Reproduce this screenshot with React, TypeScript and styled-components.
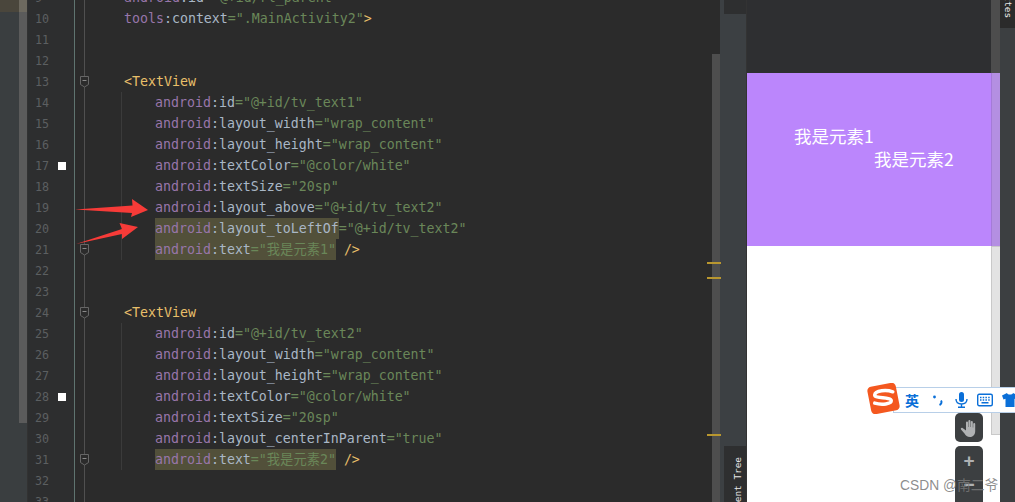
import React, { ReactNode } from 'react';
import styled, { createGlobalStyle } from 'styled-components';

const GlobalStyle = createGlobalStyle`
  html, body { margin: 0; padding: 0; background: #2b2b2b; }
  #root { width: 1015px; height: 502px; overflow: hidden; }
`;

const MONO = `"DejaVu Sans Mono", "Liberation Mono", monospace`;
const CJK = `"Noto Sans CJK SC", "Liberation Sans", sans-serif`;

interface LineProps {
  n: number;
  changed?: boolean;
  fold?: boolean;
  guide?: boolean;
  indent?: boolean;
  children?: ReactNode;
}

const FoldMark = () => (
  <FoldIcon viewBox="0 0 10 12">
    <path d="M.5.5h8v8L4.5 11 .5 8.5z" fill="#2b2b2b" stroke="#666" />
    <path d="M2.5 4.5h4" stroke="#888" />
  </FoldIcon>
);

const Line = ({ n, changed, fold, guide, indent, children }: LineProps) => (
  <Row>
    <Gutter>
      <LineNumber>{n}</LineNumber>
      {changed && <ChangeMark />}
    </Gutter>
    <FoldCell>{fold && <FoldMark />}</FoldCell>
    <Code $guide={guide} $indent={indent}>{children}</Code>
  </Row>
);

const Attr = ({ name, value, mark, markName }: { name: string; value: ReactNode; mark?: boolean; markName?: boolean }) => {
  const key = (
    <>
      <Ns>android</Ns><Plain>:{name}</Plain>
    </>
  );
  if (markName) {
    return <><Marked>{key}</Marked><Str>={value}</Str></>;
  }
  if (mark) {
    return <Marked>{key}<Str>={value}</Str></Marked>;
  }
  return <>{key}<Str>={value}</Str></>;
};

const SogouBar = () => (
  <ImeBar>
    <ImeLogo viewBox="0 0 32 30">
      <rect x="2" y="1.500" width="28" height="27" rx="4" fill="#f4581f" transform="rotate(-11 16 15)" />
      <path d="M25 8.500C19 6.500 8 7 7.500 11.500c-.4 3.800 15.500 1.800 16 5.500.4 3.300-9 4.500-16 2.500" fill="none" stroke="#fff" strokeWidth="3.400" strokeLinecap="round" />
    </ImeLogo>
    <ImeLang>英</ImeLang>
    <ImePunct viewBox="0 0 12 12">
      <circle cx="2.500" cy="3" r="1.400" fill="#0a6fd8" />
      <path d="M9 6.500c1 1.500.5 3.500-1.500 4.500" fill="none" stroke="#0a6fd8" strokeWidth="2" />
    </ImePunct>
    <ImeIcon viewBox="0 0 13 16" $w={13}>
      <rect x="4" y="0" width="5" height="10" rx="2.500" fill="#0a6fd8" />
      <path d="M1 7c0 3.500 2.500 5 5.500 5S12 10.500 12 7M6.500 12v3M3 15.200h7" fill="none" stroke="#0a6fd8" strokeWidth="1.400" />
    </ImeIcon>
    <ImeIcon viewBox="0 0 16 13" $w={16}>
      <rect x=".7" y=".7" width="14.600" height="11.600" rx="1.500" fill="none" stroke="#0a6fd8" strokeWidth="1.400" />
      <path d="M3 4h1.500M5.700 4h1.500M8.400 4h1.500M11.200 4h1.500M3 6.500h1.500M5.700 6.500h1.500M8.400 6.500h1.500M11.200 6.500h1.500M4.500 9.300h7" stroke="#0a6fd8" strokeWidth="1.400" />
    </ImeIcon>
    <ImeIcon viewBox="0 0 16 14" $w={16}>
      <path d="M5 0 0 2.500 1.500 6.500 3.500 5.800V14h9V5.800l2 .7L16 2.500 11 0c-.5 2-5.500 2-6 0z" fill="#0a6fd8" />
    </ImeIcon>
  </ImeBar>
);

const HandIcon = () => (
  <HandSvg viewBox="0 0 18 18">
    <path
      d="M6 9V3.500a1 1 0 0 1 2 0V8h.4V2a1 1 0 0 1 2 0v6h.4V3a1 1 0 0 1 2 0v5.500h.4V5a1 1 0 0 1 2 0v7c0 3.500-2 6-5.200 6-3 0-4.200-1.500-5.500-3.500L1 10.500c-.7-1 .6-2.200 1.600-1.400L6 11.500z"
      fill="#afb1b3"
    />
  </HandSvg>
);

export default function App() {
  return (
    <Screen>
      <GlobalStyle />
      <Editor>
        <Rail>
          <RailTint />
        </Rail>
        <LeftScroll>
          <LeftThumb />
        </LeftScroll>
        <EditorBody>
          <Line n={9}><Attr name="id" value={'"@+id/rl_parent"'} /></Line>
          <Line n={10}><Ns>tools</Ns><Plain>:context</Plain><Str>=".MainActivity2"</Str><Tag>&gt;</Tag></Line>
          <Line n={11} />
          <Line n={12} />
          <Line n={13} fold><Tag>&lt;TextView</Tag></Line>
          <Line n={14} guide indent><Attr name="id" value={'"@+id/tv_text1"'} /></Line>
          <Line n={15} guide indent><Attr name="layout_width" value={'"wrap_content"'} /></Line>
          <Line n={16} guide indent><Attr name="layout_height" value={'"wrap_content"'} /></Line>
          <Line n={17} changed guide indent><Attr name="textColor" value={'"@color/white"'} /></Line>
          <Line n={18} guide indent><Attr name="textSize" value={'"20sp"'} /></Line>
          <Line n={19} guide indent><Attr name="layout_above" value={'"@+id/tv_text2"'} /></Line>
          <Line n={20} guide indent><Attr name="layout_toLeftOf" markName value={'"@+id/tv_text2"'} /></Line>
          <Line n={21} fold guide indent>
            <Attr name="text" mark value={'"我是元素1"'} /><Tag> /&gt;</Tag>
          </Line>
          <Line n={22} />
          <Line n={23} />
          <Line n={24} fold><Tag>&lt;TextView</Tag></Line>
          <Line n={25} guide indent><Attr name="id" value={'"@+id/tv_text2"'} /></Line>
          <Line n={26} guide indent><Attr name="layout_width" value={'"wrap_content"'} /></Line>
          <Line n={27} guide indent><Attr name="layout_height" value={'"wrap_content"'} /></Line>
          <Line n={28} changed guide indent><Attr name="textColor" value={'"@color/white"'} /></Line>
          <Line n={29} guide indent><Attr name="textSize" value={'"20sp"'} /></Line>
          <Line n={30} guide indent><Attr name="layout_centerInParent" value={'"true"'} /></Line>
          <Line n={31} fold guide indent>
            <Attr name="text" mark value={'"我是元素2"'} /><Tag> /&gt;</Tag>
          </Line>
          <Line n={32} />
          <Line n={33} />
        </EditorBody>
        <RightScroll>
          <RightThumb />
        </RightScroll>
        <Stripe $top={262} />
        <Stripe $top={277} />
        <Stripe $top={434} />
      </Editor>

      <ToolRail>
        <TopTab />
        <BottomTab><VerticalUp>Component Tree</VerticalUp></BottomTab>
      </ToolRail>

      <Design>
        <DesignTop />
        <Preview>
          <PreviewText $left={47}>我是元素1</PreviewText>
          <PreviewText $left={127}>我是元素2</PreviewText>
        </Preview>
        <DesignBlank />
        <DesignScroll>
          <ScrollOverDark />
          <ScrollOverPurple />
          <ScrollOverWhite />
        </DesignScroll>
      </Design>

      <EdgeRail>
        <PaletteTab><VerticalDown>Palettes</VerticalDown></PaletteTab>
      </EdgeRail>

      <HandButton><HandIcon /></HandButton>
      <ZoomButton>
        <ZoomGlyph>+</ZoomGlyph>
        <ZoomGlyph>−</ZoomGlyph>
      </ZoomButton>
      <SogouBar />
      <Watermark>CSDN @南二爷</Watermark>

      <Arrows viewBox="0 0 160 60">
        <path d="M-3 22.500 54.500 18.500 54 12 70 23 53 30 54 26z" fill="#f73b38" />
        <path d="M-2 57 44 42 41.500 36 60 40 44 52 44 47z" fill="#f73b38" />
      </Arrows>
    </Screen>
  );
}

const Screen = styled.div`
  position: relative;
  display: flex;
  width: 1015px;
  height: 502px;
  overflow: hidden;
  background: #2b2b2b;
`;

const Editor = styled.div`
  display: flex;
  width: 720px;
  height: 502px;
  flex: none;
`;

const Rail = styled.div`
  width: 19px;
  flex: none;
  background: #3a3e40;
`;

const RailTint = styled.div`
  height: 12px;
  background: #4a463c;
`;

const LeftScroll = styled.div`
  width: 8px;
  flex: none;
  background: #3a3e40;
  border-right: 1px solid #323232;
`;

const LeftThumb = styled.div`
  height: 423px;
  background: linear-gradient(#6d695f 0 12px, #5b5b5b 12px);
`;

const EditorBody = styled.div`
  width: 684px;
  flex: none;
  margin-top: -13px;
  overflow: hidden;
`;

const Row = styled.div`
  display: flex;
  height: 21px;
`;

const Gutter = styled.div`
  display: flex;
  align-items: center;
  width: 47px;
  flex: none;
  padding-left: 7px;
  box-sizing: border-box;
  background: #2d2e2f;
  border-right: 1px solid #5f7470;
`;

const LineNumber = styled.span`
  width: 23px;
  flex: none;
  height: 21px;
  font: 11.7px/23px ${MONO};
  color: #5c5f61;
`;

const ChangeMark = styled.span`
  width: 8px;
  height: 8px;
  background: #fff;
`;

const FoldCell = styled.div`
  position: relative;
  display: flex;
  align-items: center;
  width: 46px;
  flex: none;
  padding-left: 5px;
  box-sizing: border-box;
  &::before {
    content: '';
    position: absolute;
    left: 9px;
    top: 0;
    bottom: 0;
    width: 1px;
    background: #505050;
  }
`;

const FoldIcon = styled.svg`
  position: relative;
  width: 10px;
  height: 12px;
`;

const Code = styled.div<{ $guide?: boolean; $indent?: boolean }>`
  flex: 1;
  height: 21px;
  padding-left: ${({ $indent }) => ($indent ? '33px' : '2px')};
  border-left: 1px solid ${({ $guide }) => ($guide ? '#3b3b3b' : 'transparent')};
  font: 13.28px/21px ${MONO}, ${CJK};
  white-space: pre;
  color: #a9b7c6;
`;

const Ns = styled.span`
  color: #9876aa;
`;

const Plain = styled.span`
  color: #a9b7c6;
`;

const Str = styled.span`
  color: #6a8759;
`;

const Tag = styled.span`
  color: #e8bf6a;
`;

const Marked = styled.span`
  display: inline-block;
  height: 21px;
  background: #52503a;
  vertical-align: top;
`;

const RightScroll = styled.div`
  width: 8px;
  flex: none;
  padding-top: 54px;
  box-sizing: border-box;
`;

const RightThumb = styled.div`
  height: 100%;
  background: #4e4e4e;
`;

const Stripe = styled.div<{ $top: number }>`
  position: absolute;
  left: 707px;
  top: ${({ $top }) => $top}px;
  width: 14px;
  height: 2px;
  background: #b9972f;
`;

const ToolRail = styled.div`
  display: flex;
  flex-direction: column;
  justify-content: space-between;
  width: 27px;
  height: 502px;
  flex: none;
  padding: 0 1px 0 4px;
  box-sizing: border-box;
  background: #3c4043;
  border-right: 1px solid #333;
`;

const TopTab = styled.div`
  width: 22px;
  height: 14px;
  background: #2e2f30;
`;

const BottomTab = styled.div`
  width: 22px;
  height: 56px;
  padding: 11px 0 0 7px;
  box-sizing: border-box;
  background: #2e2f30;
  overflow: hidden;
`;

const VerticalUp = styled.span`
  display: block;
  width: 14px;
  writing-mode: vertical-rl;
  transform: rotate(180deg);
  white-space: nowrap;
  font: 9.4px/14px ${MONO};
  color: #e8e8e8;
`;

const Design = styled.div`
  position: relative;
  display: flex;
  flex-direction: column;
  width: 253px;
  height: 502px;
  flex: none;
`;

const DesignTop = styled.div`
  height: 73px;
  background: #2e2f31;
`;

const Preview = styled.div`
  display: flex;
  flex-direction: column;
  height: 173px;
  padding-top: 51px;
  box-sizing: border-box;
  background: #bb86fc;
`;

const PreviewText = styled.div<{ $left: number }>`
  margin-left: ${({ $left }) => $left}px;
  font: 17.500px/23px ${CJK};
  color: #fff;
`;

const DesignBlank = styled.div`
  flex: 1;
  background: #fff;
`;

const DesignScroll = styled.div`
  position: absolute;
  right: 0;
  top: 0;
  bottom: 0;
  display: flex;
  flex-direction: column;
  width: 9px;
`;

const ScrollOverDark = styled.div`
  height: 73px;
  background: #4d4d4d;
`;

const ScrollOverPurple = styled.div`
  height: 173px;
  background: #b48fe2;
  border-left: 1px solid #a57bd8;
  box-sizing: border-box;
`;

const ScrollOverWhite = styled.div`
  height: 189px;
  background: #e3e3e3;
  border: 1px solid #c9c9c9;
  border-right: 0;
  box-sizing: border-box;
`;

const EdgeRail = styled.div`
  flex: 1;
  background: #3c3f41;
`;

const PaletteTab = styled.div`
  display: flex;
  flex-direction: column;
  justify-content: flex-end;
  align-items: center;
  height: 28px;
  padding-bottom: 10px;
  box-sizing: border-box;
  background: #2b2b2b;
  overflow: hidden;
`;

const VerticalDown = styled.span`
  flex: none;
  writing-mode: vertical-rl;
  white-space: nowrap;
  font: 9.4px/14px ${MONO};
  color: #e8e8e8;
`;

const HandButton = styled.div`
  position: absolute;
  left: 955px;
  top: 413px;
  display: flex;
  align-items: center;
  justify-content: center;
  width: 28px;
  height: 29px;
  border-radius: 5px;
  background: #3c3f41;
`;

const HandSvg = styled.svg`
  width: 18px;
  height: 18px;
`;

const ZoomButton = styled.div`
  position: absolute;
  left: 955px;
  top: 446px;
  display: flex;
  flex-direction: column;
  align-items: center;
  width: 28px;
  height: 70px;
  padding-top: 4px;
  box-sizing: border-box;
  border-radius: 5px;
  background: #3c3f41;
`;

const ZoomGlyph = styled.span`
  height: 28px;
  font: 700 19px/22px "Liberation Sans", sans-serif;
  color: #afb1b3;
  & + & {
    margin-top: -4px;
  }
`;

const ImeBar = styled.div`
  position: absolute;
  left: 893px;
  top: 387px;
  display: flex;
  align-items: center;
  width: 130px;
  height: 26px;
  box-sizing: border-box;
  background: #fff;
  border: 1px solid #b8cfe8;
  border-right: 0;
`;

const ImeLogo = styled.svg`
  position: absolute;
  left: -27px;
  top: -5px;
  width: 33px;
  height: 31px;
`;

const ImeLang = styled.span`
  margin-left: 11px;
  width: 15px;
  font: 700 14px/24px ${CJK};
  color: #0a6fd8;
`;

const ImePunct = styled.svg`
  width: 12px;
  height: 12px;
  margin-left: 12px;
`;

const ImeIcon = styled.svg<{ $w: number }>`
  width: ${({ $w }) => $w}px;
  height: 16px;
  margin-left: ${({ $w }) => ($w === 13 ? 11 : 9)}px;
`;

const Watermark = styled.div`
  position: absolute;
  left: 900px;
  top: 477px;
  font: 13.8px/18px "Liberation Sans", ${CJK};
  color: rgba(120, 120, 120, 0.85);
  white-space: nowrap;
`;

const Arrows = styled.svg`
  position: absolute;
  left: 78px;
  top: 187px;
  width: 160px;
  height: 60px;
  overflow: visible;
`;
